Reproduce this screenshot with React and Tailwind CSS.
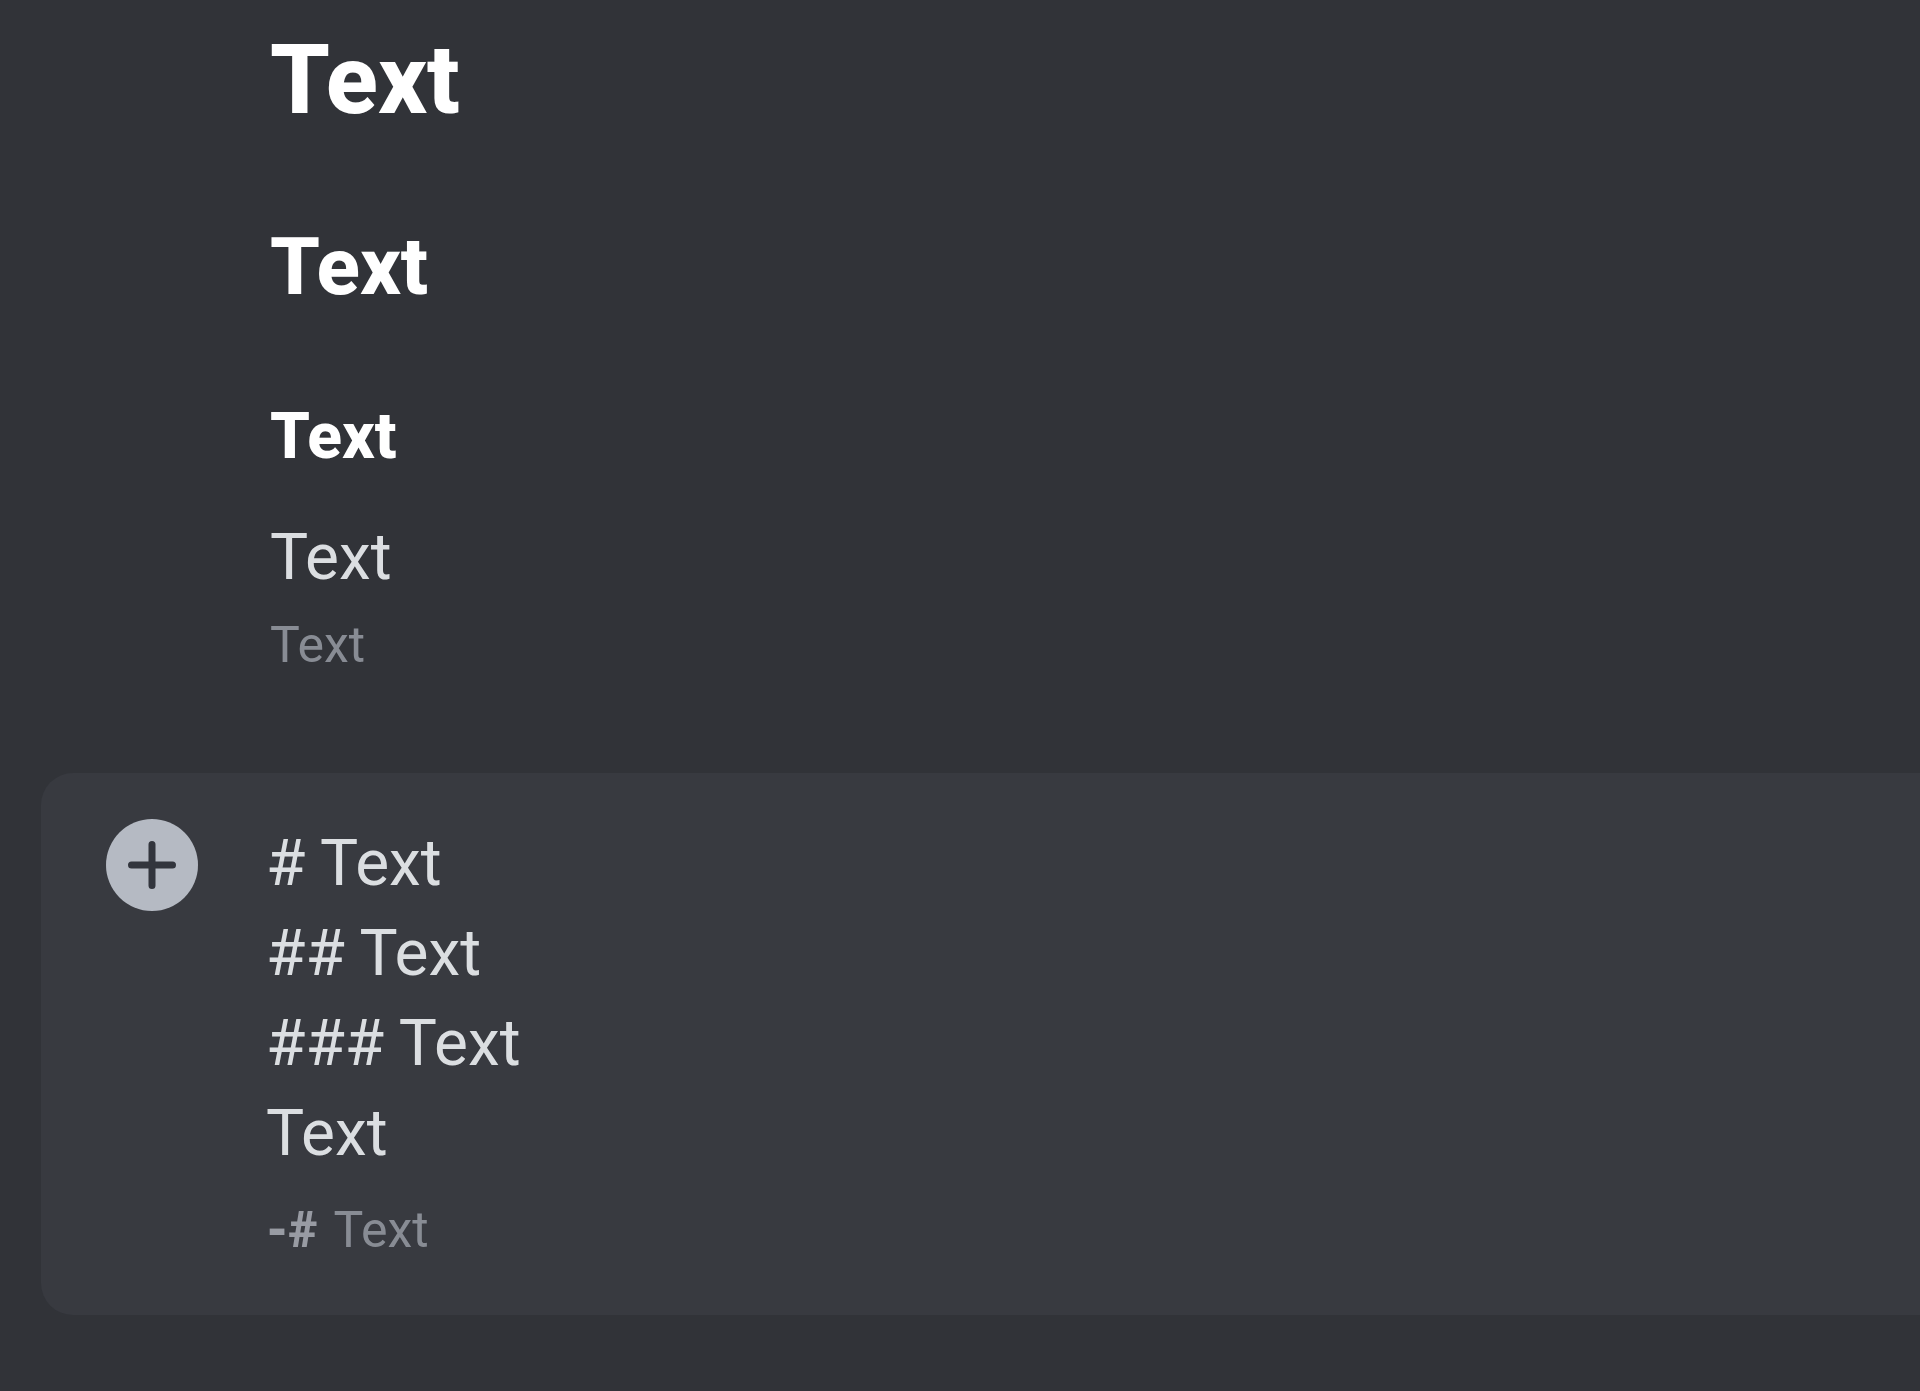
import { useState } from "react";

const draft = "# Text\n## Text\n### Text\nText";

function Message() {
  return (
    <article className="flex flex-col pl-[270px] pt-[14px]">
      <h1 className="text-[96px] leading-[132px] font-extrabold text-white">Text</h1>
      <h2 className="mt-[66px] text-[80px] leading-[110px] font-extrabold text-white">Text</h2>
      <h3 className="mt-[70px] text-[64px] leading-[90px] font-extrabold text-white">Text</h3>
      <p className="mt-[31px] text-[64px] leading-[90px] text-[#dbdee1]">Text</p>
      <small className="mt-[6px] text-[50px] leading-[72px] text-[#888c94]">Text</small>
    </article>
  );
}

function AttachButton() {
  return (
    <button
      type="button"
      aria-label="Attach"
      className="size-[92px] shrink-0 rounded-full bg-[#b5bac3] text-[#32353d] hover:bg-[#dbdee1]"
    >
      <svg viewBox="0 0 92 92" className="size-full" fill="none" stroke="currentColor" strokeWidth="7" strokeLinecap="round">
        <path d="M46 25.500v41M25.500 46h41" />
      </svg>
    </button>
  );
}

function Composer() {
  const [body, setBody] = useState(draft);
  const [subtext, setSubtext] = useState("Text");

  return (
    <form className="ml-[41px] mt-[92px] flex gap-[68px] rounded-l-[32px] bg-[#383a40] pb-[40px] pl-[65px] pt-[46px]">
      <AttachButton />
      <div className="flex min-w-0 flex-1 flex-col">
        <textarea
          aria-label="Message"
          rows={4}
          spellCheck={false}
          className="block w-full resize-none overflow-hidden bg-transparent text-[64px] leading-[90px] text-[#dbdee1] outline-none"
          value={body}
          onChange={(e) => setBody(e.target.value)}
        />
        <div className="mt-[6px] flex gap-4 text-[50px] leading-[90px] text-[#888c94]">
          <label htmlFor="subtext" className="font-black text-[#989ba3]">-#</label>
          <input
            id="subtext"
            type="text"
            className="min-w-0 flex-1 bg-transparent outline-none"
            value={subtext}
            onChange={(e) => setSubtext(e.target.value)}
          />
        </div>
      </div>
    </form>
  );
}

export default function App() {
  return (
    <main className="min-h-screen overflow-hidden bg-[#313338] font-['Roboto','Noto_Sans',sans-serif]">
      <Message />
      <Composer />
    </main>
  );
}
